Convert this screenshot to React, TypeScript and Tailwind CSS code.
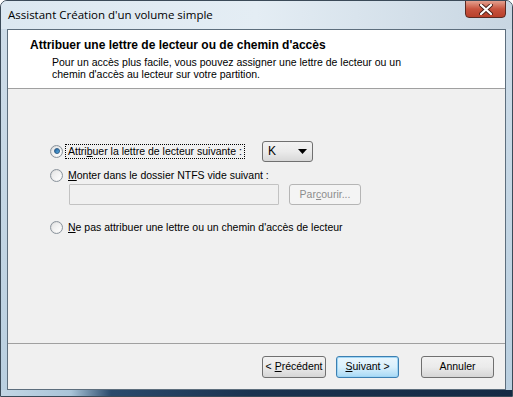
import React from "react";

function Radio({ checked }: { checked?: boolean }) {
  return (
    <div className="relative w-[13px] h-[13px] rounded-full border border-[#8a939c] bg-gradient-to-br from-[#d8d8d8] to-[#fafafa] shrink-0">
      <div className="absolute inset-[1px] rounded-full bg-gradient-to-br from-[#e6e6e6] to-[#ffffff]" />
      {checked && (
        <div className="absolute left-[2.5px] top-[2.5px] w-[6px] h-[6px] rounded-full bg-gradient-to-br from-[#1f5f9a] to-[#5db2e8] border border-[#2a5a85]" />
      )}
    </div>
  );
}

export default function App() {
  const f = { fontFamily: '"Liberation Sans", Arial, sans-serif' };
  return (
    <div
      className="relative w-[513px] h-[397px] overflow-hidden rounded-t-[7px] border border-[#3b4a58] bg-gradient-to-b from-[#cfdde9] via-[#c4d6e4] to-[#b9cfe0]"
      style={f}
    >
      {/* title bar */}
      <div className="h-[28px] flex items-start justify-between bg-gradient-to-r from-[#dce8f1] via-[#e4edf4] to-[#c8d6e2]">
        <div
          className="pl-[7px] pt-[6px] text-[11.5px] text-black leading-[15px]"
          style={{ fontFamily: '"Open Sans", "Noto Sans", sans-serif' }}
        >
          Assistant Création d'un volume simple
        </div>
        <div className="mr-[6px] w-[41px] h-[18px] -mt-[1px] rounded-b-[4px] border border-[#5a2a22] bg-gradient-to-b from-[#e3a08f] via-[#c7533e] to-[#b8402a] flex items-center justify-center">
          <svg width="14" height="11" viewBox="0 0 14 11">
            <path d="M2 1 L12 10 M12 1 L2 10" stroke="#4a2018" strokeWidth="4" strokeLinecap="round" />
            <path d="M2 1 L12 10 M12 1 L2 10" stroke="#ffffff" strokeWidth="2.2" strokeLinecap="round" />
          </svg>
        </div>
      </div>

      {/* client area */}
      <div className="mx-[6px] h-[361px] border border-[#5d6e7d] bg-[#f0f0f0] flex flex-col">
        {/* header */}
        <div className="h-[59px] bg-white border-b border-[#a0a0a0] pl-[22px] pt-[8px]">
          <div className="text-[12px] font-bold leading-[14px] text-black">
            Attribuer une lettre de lecteur ou de chemin d'accès
          </div>
          <div className="pl-[22px] pt-[4px] text-[10.5px] leading-[12px] text-black">
            <div>Pour un accès plus facile, vous pouvez assigner une lettre de lecteur ou un</div>
            <div>chemin d'accès au lecteur sur votre partition.</div>
          </div>
        </div>

        {/* body */}
        <div className="flex-1 pl-[42px] pt-[52px] text-[10.5px] text-black">
          <div className="flex items-center h-[20px]">
            <Radio checked />
            <div className="ml-[2px] px-[2px] border border-dotted border-black leading-[13px]">
              Attri<span className="underline">b</span>uer la lettre de lecteur suivante :
            </div>
            <div className="ml-[17px] w-[51px] h-[21px] rounded-[3px] border border-[#707070] bg-gradient-to-b from-[#f2f2f2] via-[#ebebeb] to-[#d8d8d8] flex items-center justify-between px-[5px]">
              <span className="text-[12px]">K</span>
              <svg width="9" height="5" viewBox="0 0 9 5">
                <path d="M0 0 L9 0 L4.5 5 Z" fill="#000" />
              </svg>
            </div>
          </div>
          <div className="flex items-center mt-[7px] h-[14px]">
            <Radio />
            <div className="ml-[5px] leading-[13px]">
              <span className="underline">M</span>onter dans le dossier NTFS vide suivant :
            </div>
          </div>
          <div className="flex mt-[2px] ml-[19px]">
            <div className="w-[210px] h-[21px] border border-[#c2c2c2] bg-[#f0f0f0] rounded-[1px]" />
            <div className="ml-[10px] w-[72px] h-[21px] rounded-[3px] border border-[#b5b5b5] bg-[#f4f4f4] flex items-center justify-center text-[#8d8d8d]">
              Par<span className="underline">c</span>ourir...
            </div>
          </div>
          <div className="flex items-center mt-[15px] h-[14px]">
            <Radio />
            <div className="ml-[5px] leading-[13px]">
              <span className="underline">N</span>e pas attribuer une lettre ou un chemin d'accès de lecteur
            </div>
          </div>
        </div>

        {/* footer */}
        <div className="h-[46px] border-t border-[#a0a0a0] flex items-start justify-end pt-[12px] pr-[11px] text-[10.5px] text-black">
          <div className="w-[64px] h-[22px] rounded-[3px] border border-[#707070] bg-gradient-to-b from-[#f2f2f2] via-[#ebebeb] to-[#d6d6d6] flex items-center justify-center">
            &lt;<span className="underline ml-[3px]">P</span>récédent
          </div>
          <div className="ml-[10px] w-[63px] h-[22px] rounded-[3px] border border-[#3c7fb1] bg-gradient-to-b from-[#eaf6fd] via-[#d9f0fc] to-[#a7d9f5] flex items-center justify-center shadow-[inset_0_0_0_1px_#9ed5f5]">
            <span className="underline">S</span>uivant &gt;
          </div>
          <div className="ml-[22px] w-[73px] h-[22px] rounded-[3px] border border-[#707070] bg-gradient-to-b from-[#f2f2f2] via-[#ebebeb] to-[#d6d6d6] flex items-center justify-center">
            Annuler
          </div>
        </div>
      </div>

      {/* bottom frame */}
      <div className="h-[7px] bg-[linear-gradient(90deg,#c3d6e5_0px,#a9c4d8_70px,#2a4a6c_110px,#1b3350_250px,#152a44_100%)]" />
    </div>
  );
}
